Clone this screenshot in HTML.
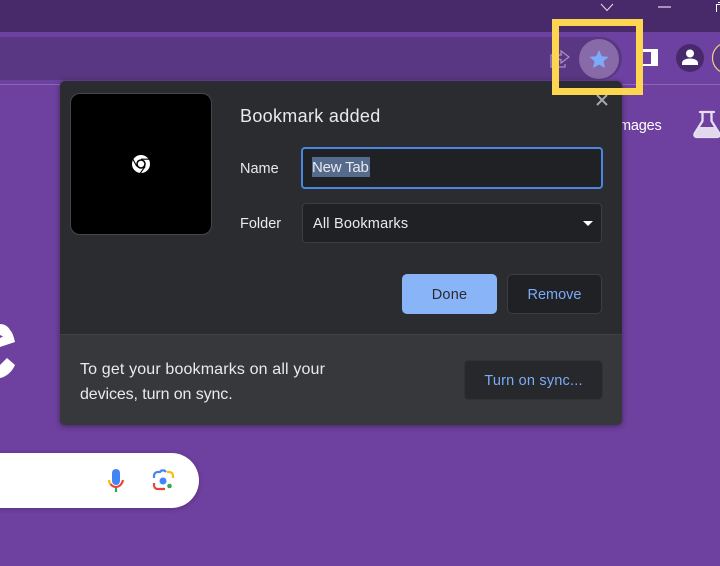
<!DOCTYPE html>
<html>
<head>
<meta charset="utf-8">
<style>
html,body{margin:0;padding:0;}
body{width:720px;height:566px;overflow:hidden;position:relative;background:#6e409f;font-family:"Liberation Sans",sans-serif;}
.a{position:absolute;}
.t{position:absolute;white-space:nowrap;color:#e8eaed;font-size:15px;line-height:20px;}
</style>
</head>
<body>
<div class="a" style="left:0;top:0;width:720px;height:32px;background:#482a6b"></div>
<div class="a" style="left:0;top:32px;width:720px;height:52px;background:#6d41a1"></div>
<div class="a" style="left:-30px;top:37px;width:652px;height:43px;background:#5a3782;border-radius:22px"></div>
<div class="a" style="left:0;top:84px;width:720px;height:1px;background:#8a69b0"></div>

<svg class="a" style="left:0;top:0" width="720" height="566" viewBox="0 0 720 566">
  <path d="M601 4l6 6.500 6-6.500" fill="none" stroke="#e6e0ee" stroke-width="1"/>
  <path d="M658 7h13" stroke="#fff" stroke-width="1"/>
  <path d="M716.500 12V4.500h3.500M718 2.500h2" fill="none" stroke="#fff" stroke-width="1"/>
  <path d="M562 55h-11v12h14v-3M561 51l8 6-8 6v-3.500h-3c-1 0-2 .5-2 1.500v-3c0-2 1-3 3-3h2z" fill="none" stroke="#a791c2" stroke-width="1.200"/>
  <circle cx="599" cy="59" r="20" fill="#896aa8"/>
  <path d="M599 50l2.800 6.300 6.700.6-5.100 4.500 1.600 6.600-6-3.500-6 3.500 1.600-6.600-5.100-4.500 6.700-.6z" fill="#7cacf8"/>
  <rect x="643" y="49" width="15" height="17" fill="#fff"/>
  <rect x="643" y="52" width="8" height="12" fill="#6d41a1"/>
  <circle cx="690" cy="58" r="14" fill="#48296c"/>
  <circle cx="690" cy="53.500" r="4" fill="#fff"/>
  <path d="M682 65v-2c0-3 4-4.500 8-4.500s8 1.500 8 4.500v2z" fill="#fff"/>
  <circle cx="728" cy="58" r="15.500" fill="#5a3782" stroke="#f0cf86" stroke-width="1.200"/>
  <path d="M700 112h14M702.500 112v9l-7.500 12c-1.500 2.500 0 4 2 4h20c2 0 3.500-1.500 2-4l-7.500-12v-9" fill="none" stroke="#e8e0f0" stroke-width="2.300" stroke-linejoin="round" stroke-linecap="round"/>
  <path d="M699 127h16l4 8c.5 1 0 2-1 2h-22c-1 0-1.500-1-1-2z" fill="#e3d9ec"/>
  <path d="M0 324c4 0 8 2 10 6 3 3 4 8 5 12l-15 5v-9l3-1.500-3-1.500z" fill="#fff"/>
  <path d="M0 365l7-7 8 7c-3 7-9 12-15 13z" fill="#fff"/>
</svg>

<!-- omnibox search -->
<div class="a" style="left:-40px;top:453px;width:239px;height:55px;background:#fff;border-radius:28px;box-shadow:0 1px 4px rgba(40,20,70,.35)"></div>
<svg class="a" style="left:100px;top:460px" width="90" height="40" viewBox="100 460 90 40">
  <rect x="112" y="469" width="8" height="16" rx="4" fill="#4285f4"/>
  <path d="M109 480c0 1.500.5 3 1.500 4" fill="none" stroke="#fbbc04" stroke-width="2.200"/>
  <path d="M110.500 484c1.300 1.800 3.300 3 5.500 3s5.700-1.500 7-7" fill="none" stroke="#ea4335" stroke-width="2.200"/>
  <path d="M116 488v4" stroke="#34a853" stroke-width="2.200"/>
  <path d="M154 478v-2c0-2.500 1.500-4 4-4h2l1.500-1.500h3l1.500 1.500" fill="none" stroke="#4285f4" stroke-width="2.200"/>
  <path d="M167 472h2c2.500 0 4 1.500 4 4v2" fill="none" stroke="#fbbc04" stroke-width="2.200"/>
  <path d="M154 483v2c0 2.500 1.500 4 4 4h7" fill="none" stroke="#ea4335" stroke-width="2.200"/>
  <circle cx="163" cy="481" r="3.500" fill="#4285f4"/>
  <circle cx="169.500" cy="486" r="2.300" fill="#34a853"/>
</svg>

<!-- Images label -->
<div class="t" style="left:619px;top:116px;color:#fff;font-size:14.500px;letter-spacing:-.2px">mages</div>

<!-- bubble -->
<div class="a" style="left:60px;top:81px;width:562px;height:344px;background:#2b2c30;border-radius:5px;box-shadow:0 1px 6px rgba(30,20,50,.6);overflow:hidden">
  <div class="a" style="left:0;top:253px;width:562px;height:91px;background:#37383b;border-top:1px solid #414246;box-sizing:border-box"></div>
</div>

<!-- close x -->
<svg class="a" style="left:596px;top:94px" width="12" height="12" viewBox="0 0 12 12"><path d="M1 1l10 10M11 1L1 11" stroke="#a6a7a9" stroke-width="2"/></svg>

<!-- thumb -->
<div class="a" style="left:70px;top:93px;width:142px;height:142px;box-sizing:border-box;background:#000;border:1px solid #45464a;border-radius:10px"></div>
<svg class="a" style="left:131px;top:154px" width="20" height="20" viewBox="0 0 20 20">
  <circle cx="10" cy="10" r="9" fill="#fff"/>
  <circle cx="10" cy="10" r="4.800" fill="#000"/>
  <circle cx="10" cy="10" r="3.200" fill="#fff"/>
  <path d="M10 5.200H19M5.800 12.400L1.500 4.500M14.200 12.400L9 19.500" stroke="#000" stroke-width="1.100"/>
</svg>

<div class="t" style="left:240px;top:105px;font-size:18px;line-height:22px;letter-spacing:.32px">Bookmark added</div>
<div class="t" style="left:240px;top:159px;font-size:14.500px">Name</div>
<div class="t" style="left:240px;top:214px;font-size:14.500px">Folder</div>

<!-- name input -->
<div class="a" style="left:301px;top:147px;width:302px;height:42px;box-sizing:border-box;background:#202124;border:2px solid #4a86e0;border-radius:4px"></div>
<div class="a" style="left:312px;top:157px;width:58px;height:20px;background:#566a8c"></div>
<div class="t" style="left:312px;top:158px;font-size:15px;letter-spacing:-.2px">New Tab</div>

<!-- folder select -->
<div class="a" style="left:302px;top:203px;width:300px;height:40px;box-sizing:border-box;background:#202124;border:1px solid #3c3d41;border-radius:4px"></div>
<div class="t" style="left:313px;top:214px;font-size:14.500px;letter-spacing:.2px">All Bookmarks</div>
<svg class="a" style="left:582px;top:220px" width="12" height="7" viewBox="0 0 12 7"><path d="M1 1h10L6 6z" fill="#fff"/></svg>

<!-- buttons -->
<div class="a" style="left:402px;top:274px;width:95px;height:40px;background:#8ab4f8;border-radius:5px"></div>
<div class="t" style="left:402px;top:285px;width:95px;text-align:center;color:#2a2b2f;font-size:14.500px;letter-spacing:.2px">Done</div>
<div class="a" style="left:507px;top:274px;width:95px;height:40px;box-sizing:border-box;background:#202124;border:1px solid #3c3d41;border-radius:5px"></div>
<div class="t" style="left:507px;top:285px;width:95px;text-align:center;color:#7baaf7;font-size:14.500px">Remove</div>

<!-- footer -->
<div class="t" style="left:80px;top:360px;font-size:16px;letter-spacing:.15px">To get your bookmarks on all your</div>
<div class="t" style="left:80px;top:385px;font-size:16px;letter-spacing:-.1px">devices, turn on sync.</div>
<div class="a" style="left:464px;top:360px;width:139px;height:40px;box-sizing:border-box;background:#27282c;border:1px solid #313236;border-radius:5px"></div>
<div class="t" style="left:464px;top:371px;width:139px;text-align:center;color:#7baaf7;font-size:14.500px;letter-spacing:.2px">Turn on sync...</div>

<!-- yellow highlight -->
<div class="a" style="left:552px;top:19px;width:91px;height:76px;box-sizing:border-box;border:7px solid #fdd64f"></div>
</body>
</html>
